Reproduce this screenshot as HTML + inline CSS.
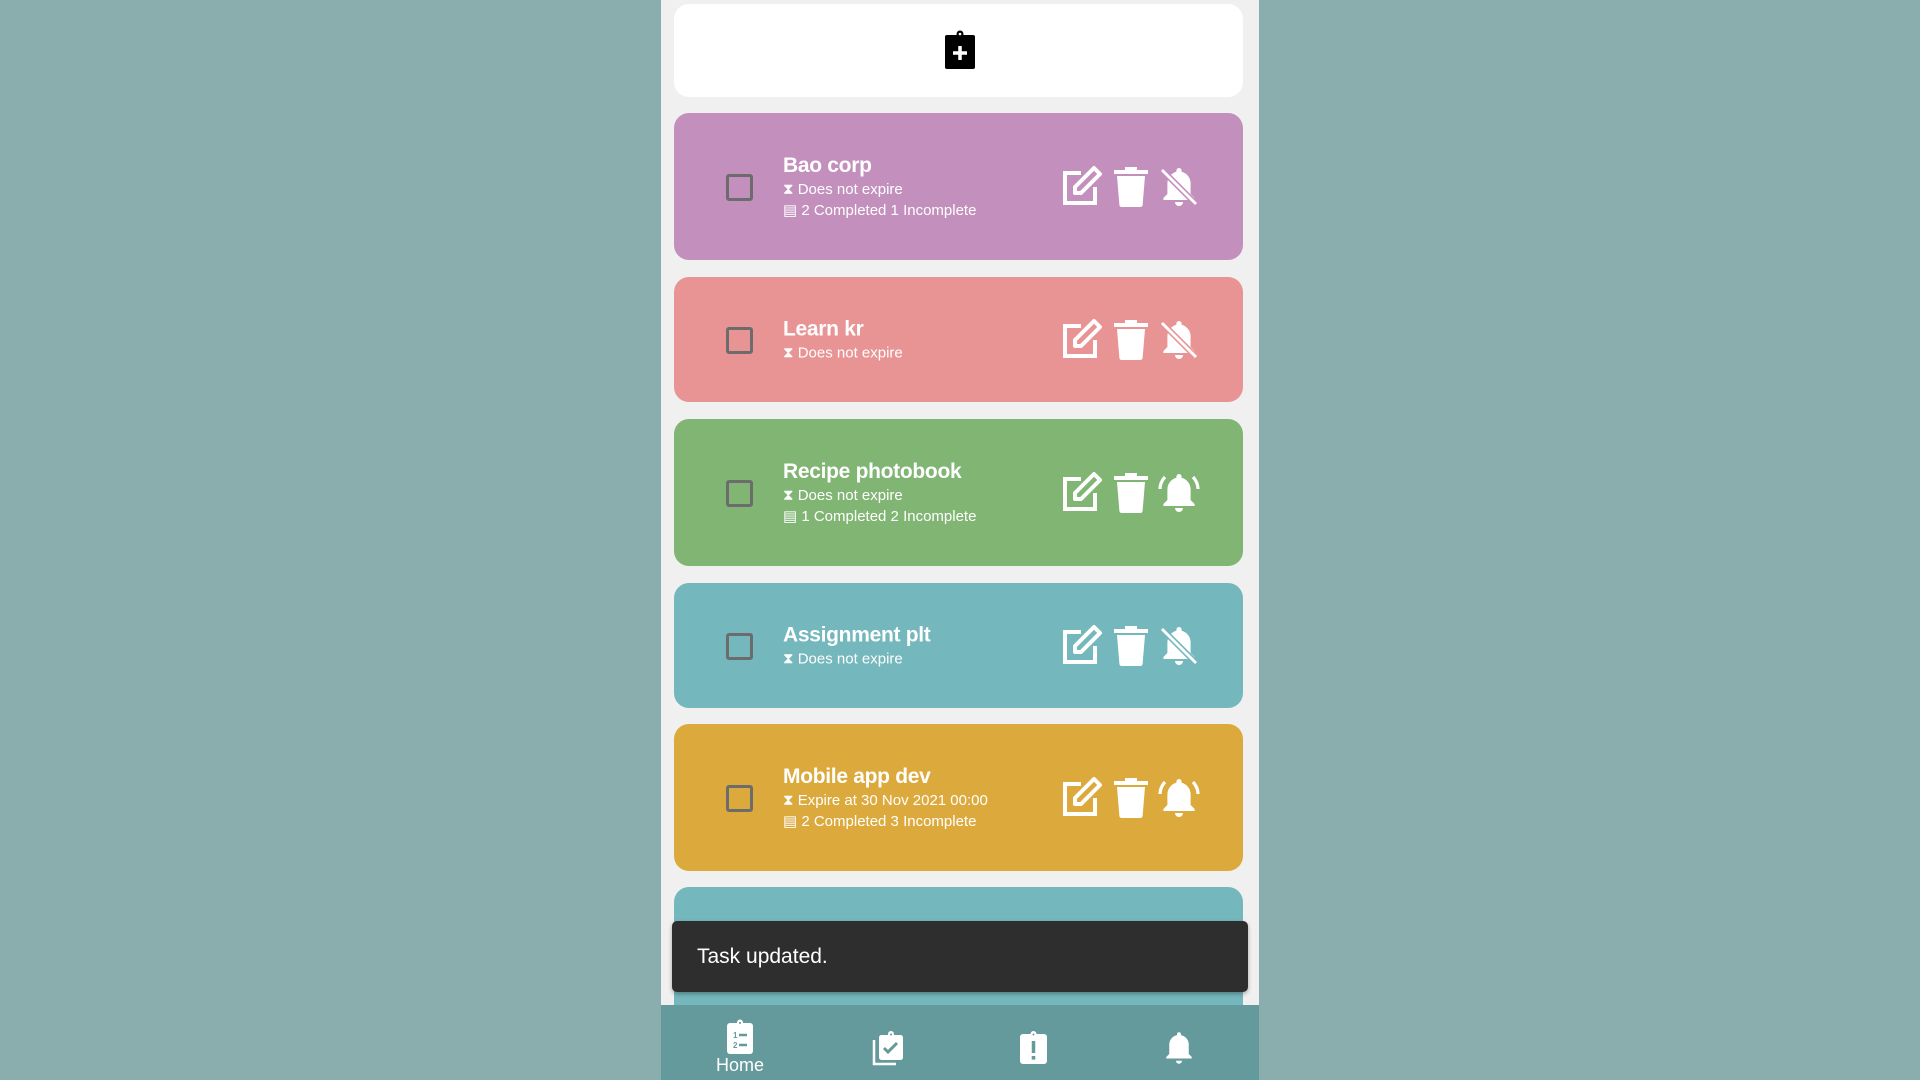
<!DOCTYPE html>
<html><head><meta charset="utf-8"><style>
*{margin:0;padding:0;box-sizing:border-box}
body{width:1920px;height:1080px;background:#8aadae;font-family:"Liberation Sans",Roboto,sans-serif;position:relative;overflow:hidden}
.phone{position:absolute;left:661px;top:0;width:598px;height:1080px;background:#f0f0f0}
.card{position:absolute;left:13px;width:569px;border-radius:15px;color:#fff}
.cb{position:absolute;left:52px;width:27px;height:27px;border:3px solid #6c6c6c;border-radius:3px;top:50%;margin-top:-13px}
.txt{position:absolute;left:109px;top:50%;transform:translateY(-50%)}
.t{font-size:21px;font-weight:bold;line-height:26px;letter-spacing:-0.3px}
.s{font-size:15px;line-height:21px;display:flex;align-items:center;gap:3px}
.ic{position:absolute;top:50%;margin-top:-24px;height:48px;width:48px}
.snack{position:absolute;left:11px;top:921px;width:576px;height:71px;background:#2e2e2e;border-radius:5px;color:#fff;font-size:21px;line-height:71px;padding-left:25px;box-shadow:0 2px 4px rgba(0,0,0,.3)}
.nav{position:absolute;left:0;top:1005px;width:598px;height:75px;background:#649a9c}
</style></head><body>
<div class="phone">
<div class="card" style="top:4px;height:93px;background:#fff;left:13px">
<svg style="position:absolute;left:270px;top:26px" width="32" height="40" viewBox="0 0 32 40"><rect x="1" y="5" width="30" height="34" rx="2" fill="#000"/><circle cx="16" cy="4" r="3.5" fill="#000"/><circle cx="16" cy="4" r="1.3" fill="#fff"/><path d="M16 16v14M9 23h14" stroke="#fff" stroke-width="3.5"/></svg>
</div>

<div class="card" style="top:113px;height:147px;background:#c390bd">
<div class="cb"></div>
<div class="txt"><div class="t">Bao corp</div><div class="s">⧗ Does not expire</div><div class="s">▤ 2 Completed 1 Incomplete</div></div>
<svg class="ic" style="left:383px" viewBox="0 0 24 24"><path d="M12 5H4v15h15v-8" fill="none" stroke="#fff" stroke-width="2"/><path d="M18.5 2.5l3 3L12 15H9v-3z" fill="none" stroke="#fff" stroke-width="2" stroke-linejoin="round"/></svg>
<svg class="ic" style="left:433px" viewBox="0 0 24 24"><path d="M9 2h6v1.5h5.5v2H3.5v-2H9z M5 6.5h14l-1.2 14.5a1.2 1.2 0 0 1-1.2 1H7.4a1.2 1.2 0 0 1-1.2-1z" fill="#fff"/></svg>
<svg class="ic" style="left:481px" viewBox="0 0 24 24"><path d="M12 2.5a1.3 1.3 0 0 0-1.3 1.3v.6A6 6 0 0 0 6.2 10.3v5.2L4.2 17.5v1h15.6v-1l-2-2v-5.2a6 6 0 0 0-4.5-5.9v-.6A1.3 1.3 0 0 0 12 2.5z M10 19.5a2 2 0 0 0 4 0z" fill="#fff"/><path d="M3.5 3.5L20.5 20.5" stroke="#c390bd" stroke-width="3"/><path d="M3.5 3.5L20.5 20.5" stroke="#fff" stroke-width="1.4"/></svg>
</div>

<div class="card" style="top:277px;height:125px;background:#e89494">
<div class="cb"></div>
<div class="txt"><div class="t">Learn kr</div><div class="s">⧗ Does not expire</div></div>
<svg class="ic" style="left:383px" viewBox="0 0 24 24"><path d="M12 5H4v15h15v-8" fill="none" stroke="#fff" stroke-width="2"/><path d="M18.5 2.5l3 3L12 15H9v-3z" fill="none" stroke="#fff" stroke-width="2" stroke-linejoin="round"/></svg>
<svg class="ic" style="left:433px" viewBox="0 0 24 24"><path d="M9 2h6v1.5h5.5v2H3.5v-2H9z M5 6.5h14l-1.2 14.5a1.2 1.2 0 0 1-1.2 1H7.4a1.2 1.2 0 0 1-1.2-1z" fill="#fff"/></svg>
<svg class="ic" style="left:481px" viewBox="0 0 24 24"><path d="M12 2.5a1.3 1.3 0 0 0-1.3 1.3v.6A6 6 0 0 0 6.2 10.3v5.2L4.2 17.5v1h15.6v-1l-2-2v-5.2a6 6 0 0 0-4.5-5.9v-.6A1.3 1.3 0 0 0 12 2.5z M10 19.5a2 2 0 0 0 4 0z" fill="#fff"/><path d="M3.5 3.5L20.5 20.5" stroke="#e89494" stroke-width="3"/><path d="M3.5 3.5L20.5 20.5" stroke="#fff" stroke-width="1.4"/></svg>
</div>

<div class="card" style="top:419px;height:147px;background:#80b574">
<div class="cb"></div>
<div class="txt"><div class="t">Recipe photobook</div><div class="s">⧗ Does not expire</div><div class="s">▤ 1 Completed 2 Incomplete</div></div>
<svg class="ic" style="left:383px" viewBox="0 0 24 24"><path d="M12 5H4v15h15v-8" fill="none" stroke="#fff" stroke-width="2"/><path d="M18.5 2.5l3 3L12 15H9v-3z" fill="none" stroke="#fff" stroke-width="2" stroke-linejoin="round"/></svg>
<svg class="ic" style="left:433px" viewBox="0 0 24 24"><path d="M9 2h6v1.5h5.5v2H3.5v-2H9z M5 6.5h14l-1.2 14.5a1.2 1.2 0 0 1-1.2 1H7.4a1.2 1.2 0 0 1-1.2-1z" fill="#fff"/></svg>
<svg class="ic" style="left:481px" viewBox="0 0 24 24"><path d="M12 2.5a1.3 1.3 0 0 0-1.3 1.3v.6A6 6 0 0 0 6.2 10.3v5.2L4.2 17.5v1h15.6v-1l-2-2v-5.2a6 6 0 0 0-4.5-5.9v-.6A1.3 1.3 0 0 0 12 2.5z M10 19.5a2 2 0 0 0 4 0z" fill="#fff"/><path d="M5 4A9 9 0 0 0 2.5 10M19 4a9 9 0 0 1 2.5 6" fill="none" stroke="#fff" stroke-width="1.6"/></svg>
</div>

<div class="card" style="top:583px;height:125px;background:#74b7bc">
<div class="cb"></div>
<div class="txt"><div class="t">Assignment plt</div><div class="s">⧗ Does not expire</div></div>
<svg class="ic" style="left:383px" viewBox="0 0 24 24"><path d="M12 5H4v15h15v-8" fill="none" stroke="#fff" stroke-width="2"/><path d="M18.5 2.5l3 3L12 15H9v-3z" fill="none" stroke="#fff" stroke-width="2" stroke-linejoin="round"/></svg>
<svg class="ic" style="left:433px" viewBox="0 0 24 24"><path d="M9 2h6v1.5h5.5v2H3.5v-2H9z M5 6.5h14l-1.2 14.5a1.2 1.2 0 0 1-1.2 1H7.4a1.2 1.2 0 0 1-1.2-1z" fill="#fff"/></svg>
<svg class="ic" style="left:481px" viewBox="0 0 24 24"><path d="M12 2.5a1.3 1.3 0 0 0-1.3 1.3v.6A6 6 0 0 0 6.2 10.3v5.2L4.2 17.5v1h15.6v-1l-2-2v-5.2a6 6 0 0 0-4.5-5.9v-.6A1.3 1.3 0 0 0 12 2.5z M10 19.5a2 2 0 0 0 4 0z" fill="#fff"/><path d="M3.5 3.5L20.5 20.5" stroke="#74b7bc" stroke-width="3"/><path d="M3.5 3.5L20.5 20.5" stroke="#fff" stroke-width="1.4"/></svg>
</div>

<div class="card" style="top:724px;height:147px;background:#dcaa3c">
<div class="cb"></div>
<div class="txt"><div class="t">Mobile app dev</div><div class="s">⧗ Expire at 30 Nov 2021 00:00</div><div class="s">▤ 2 Completed 3 Incomplete</div></div>
<svg class="ic" style="left:383px" viewBox="0 0 24 24"><path d="M12 5H4v15h15v-8" fill="none" stroke="#fff" stroke-width="2"/><path d="M18.5 2.5l3 3L12 15H9v-3z" fill="none" stroke="#fff" stroke-width="2" stroke-linejoin="round"/></svg>
<svg class="ic" style="left:433px" viewBox="0 0 24 24"><path d="M9 2h6v1.5h5.5v2H3.5v-2H9z M5 6.5h14l-1.2 14.5a1.2 1.2 0 0 1-1.2 1H7.4a1.2 1.2 0 0 1-1.2-1z" fill="#fff"/></svg>
<svg class="ic" style="left:481px" viewBox="0 0 24 24"><path d="M12 2.5a1.3 1.3 0 0 0-1.3 1.3v.6A6 6 0 0 0 6.2 10.3v5.2L4.2 17.5v1h15.6v-1l-2-2v-5.2a6 6 0 0 0-4.5-5.9v-.6A1.3 1.3 0 0 0 12 2.5z M10 19.5a2 2 0 0 0 4 0z" fill="#fff"/><path d="M5 4A9 9 0 0 0 2.5 10M19 4a9 9 0 0 1 2.5 6" fill="none" stroke="#fff" stroke-width="1.6"/></svg>
</div>

<div class="card" style="top:887px;height:140px;background:#74b7bc"></div>
<div class="snack">Task updated.</div>

<div class="nav">
<svg style="position:absolute;left:65px;top:14px" width="28" height="36" viewBox="0 0 28 36"><rect x="1" y="4" width="26" height="31" rx="3" fill="#fff"/><circle cx="14" cy="3.5" r="3" fill="#fff"/><circle cx="14" cy="4" r="1" fill="#649a9c"/><text x="7" y="19" font-size="8" font-weight="bold" fill="#649a9c" font-family="Liberation Sans">1</text><text x="7" y="29" font-size="8" font-weight="bold" fill="#649a9c" font-family="Liberation Sans">2</text><path d="M13 16h8M13 26h8" stroke="#649a9c" stroke-width="2.5"/></svg>
<div style="position:absolute;left:40px;width:78px;text-align:center;top:50px;color:#fff;font-size:18px">Home</div>
<svg style="position:absolute;left:210px;top:25px" width="32" height="36" viewBox="0 0 32 36"><path d="M3 10v24h22" fill="none" stroke="#fff" stroke-width="2.5"/><rect x="8" y="5" width="24" height="25" rx="2.5" fill="#fff"/><circle cx="20" cy="4" r="3" fill="#fff"/><circle cx="20" cy="4.5" r="1" fill="#649a9c"/><path d="M13 18l4 4 9-9" fill="none" stroke="#649a9c" stroke-width="3"/></svg>
<svg style="position:absolute;left:359px;top:25px" width="27" height="34" viewBox="0 0 27 34"><rect x="0" y="4" width="27" height="30" rx="3" fill="#fff"/><circle cx="13.5" cy="4" r="3" fill="#fff"/><circle cx="13.5" cy="4.5" r="1" fill="#649a9c"/><path d="M13.5 11v12" stroke="#649a9c" stroke-width="3.5"/><rect x="11.7" y="26" width="3.6" height="3.6" fill="#649a9c"/></svg>
<svg style="position:absolute;left:500px;top:25px" width="36" height="36" viewBox="0 0 24 24"><path d="M12 1.5a1.3 1.3 0 0 0-1.3 1.3v.6A6.5 6.5 0 0 0 5.5 10v6L3.5 18v1h17v-1l-2-2v-6a6.5 6.5 0 0 0-5.2-6.6v-.6A1.3 1.3 0 0 0 12 1.5z M10 20.5a2 2 0 0 0 4 0z" fill="#fff"/></svg>
</div>
</div>
</body></html>
